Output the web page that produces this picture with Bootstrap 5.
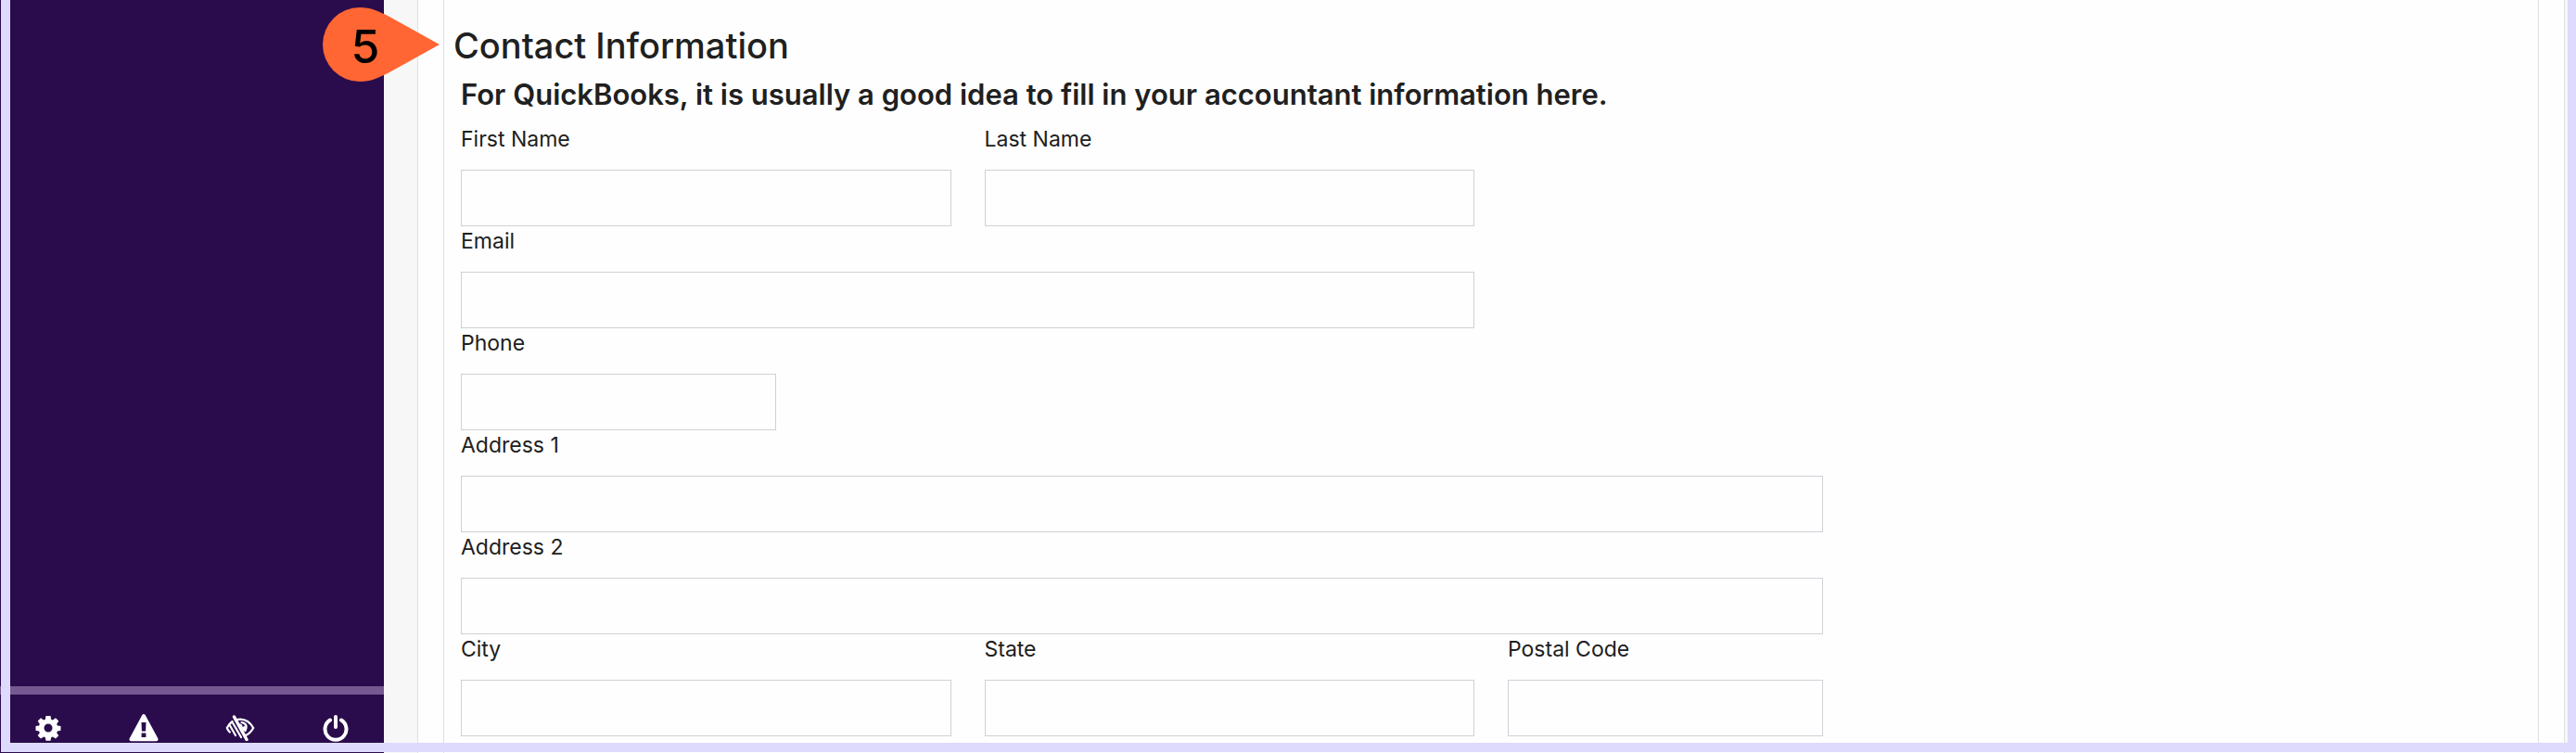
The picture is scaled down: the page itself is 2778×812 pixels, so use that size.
<!DOCTYPE html>
<html lang="en">
<head>
<meta charset="utf-8">
<meta name="viewport" content="width=device-width, initial-scale=1">
<title>Contact Information</title>
<link href="https://cdn.jsdelivr.net/npm/bootstrap@5.3.0/dist/css/bootstrap.min.css" rel="stylesheet">
<style>
body { font-family: Inter, "Liberation Sans", sans-serif; color: #202020; background: #f7f7f7; }
.sidebar { width: 414px; background: #2a0c4c; }
.sidebar-tools { border-top: 9px solid #765990; height: 72px; padding-top: 16px; }
.tool-btn { height: 40px; color: #fff; flex: 1 1 0; }
.tool-btn:hover { color: #dedafd; }
.page-pane { margin-left: 36px; margin-right: 12px; border: solid #e0e0e0; border-width: 0 1px; background: #fefefe; padding: 0 27px; }
.form-pane { border: solid #e0e0e0; border-width: 0 1px; padding-top: 24px; overflow: hidden; background: #fefefe; }
.section-title { font-size: 38px; line-height: 50px; font-weight: 500; padding-left: 10px; margin: 0; }
.section-note { font-size: 31px; line-height: 56px; font-weight: 600; padding-left: 18px; margin: 0 0 4px; }
.form-grid { --bs-gutter-x: 36px; margin: 0; }
.field-label { display: block; font-size: 23px; line-height: 33px; margin-bottom: 16px; }
.field-input { height: 61px; border: 1px solid #ced1d6; border-radius: 0; font-size: 23px; background: #fefefe; }
.step-marker { position: absolute; left: 348px; top: 8px; width: 126px; height: 80px; }
.step-number { position: absolute; inset: 0 auto auto 6px; width: 80px; line-height: 84px; font-size: 50px; font-weight: 500; text-align: center; color: #000; }
.frame-edge { position: absolute; inset: 0 0 1px 1px; border: solid #dedafd; border-width: 0 9px 10px 10px; pointer-events: none; }
</style>
</head>
<body>
<div class="position-relative d-flex min-vh-100 overflow-hidden">
  <nav class="sidebar flex-shrink-0 d-flex flex-column justify-content-end" aria-label="Tools">
    <div class="sidebar-tools d-flex">
      <button type="button" class="tool-btn btn border-0 rounded-0 p-0" aria-label="Settings">
        <svg width="28" height="28" viewBox="0 0 28 28"><path fill="currentColor" fill-rule="evenodd" d="M11.500 1h5l.7 3.700 1.700.7 3.100-2.100 3.300 3.300-2.100 3.100.7 1.700 3.600.7v4.700l-3.600.7-.7 1.700 2.100 3.100-3.300 3.300-3.100-2.100-1.700.7-.7 3.600h-5l-.7-3.600-1.700-.7-3.100 2.100-3.300-3.300 2.100-3.100-.7-1.700-3.600-.7v-4.700l3.600-.7.7-1.700-2.100-3.100 3.300-3.300 3.100 2.100 1.700-.7zM14 9.500a4.500 4.500 0 1 0 0 9 4.500 4.500 0 0 0 0-9z"/></svg>
      </button>
      <button type="button" class="tool-btn btn border-0 rounded-0 p-0" aria-label="Alerts">
        <svg width="32" height="30" viewBox="0 0 32 30"><path fill="currentColor" fill-rule="evenodd" d="M14.200 1.300q1.800-2.400 3.600 0l13.500 25q1 2.700-1.800 3h-27q-2.800-.3-1.800-3zM13.500 9l.4 9.500h4.200l.4-9.500zM13.600 20.500v4.500h4.800v-4.500z"/></svg>
      </button>
      <button type="button" class="tool-btn btn border-0 rounded-0 p-0" aria-label="Low vision">
        <svg width="32" height="28" viewBox="0 0 32 28" fill="none" stroke="currentColor" stroke-width="2.200" stroke-linecap="round"><path d="M7.500 7Q3.500 10 1.800 14q1 2.500 3 4.500M12 5q12-2.500 18.200 9-3 5.500-8.200 8"/><path stroke-width="3.400" d="M9.500 2l13.500 24.500"/><path d="M17.500 8q7.500 1.500 4 9M5 11.500l6 10.500M8 8.500l9 15.500"/><path fill="currentColor" stroke="none" d="M15 9q4 1 3.500 4 2-.5 3-2 1 4-1.500 7z"/></svg>
      </button>
      <button type="button" class="tool-btn btn border-0 rounded-0 p-0" aria-label="Log out">
        <svg width="28" height="30" viewBox="0 0 28 30" fill="none" stroke="currentColor" stroke-width="4" stroke-linecap="round"><path d="M8 6.500a11.500 11.500 0 1 0 12 0M14 3v11"/></svg>
      </button>
    </div>
  </nav>

  <main class="page-pane flex-grow-1 d-flex">
    <form class="form-pane flex-grow-1">
      <h2 class="section-title">Contact Information</h2>
      <h3 class="section-note">For QuickBooks, it is usually a good idea to fill in your accountant information here.</h3>
      <div class="row form-grid">
        <div class="col-3"><label class="field-label" for="first">First Name</label><input class="form-control field-input" id="first" type="text"></div>
        <div class="col-3"><label class="field-label" for="last">Last Name</label><input class="form-control field-input" id="last" type="text"></div>
      </div>
      <div class="row form-grid">
        <div class="col-6"><label class="field-label" for="email">Email</label><input class="form-control field-input" id="email" type="email"></div>
      </div>
      <div class="row form-grid">
        <div class="col-2"><label class="field-label" for="phone">Phone</label><input class="form-control field-input" id="phone" type="tel"></div>
      </div>
      <div class="row form-grid">
        <div class="col-8"><label class="field-label" for="addr1">Address 1</label><input class="form-control field-input" id="addr1" type="text"></div>
      </div>
      <div class="row form-grid">
        <div class="col-8"><label class="field-label" for="addr2">Address 2</label><input class="form-control field-input" id="addr2" type="text"></div>
      </div>
      <div class="row form-grid">
        <div class="col-3"><label class="field-label" for="city">City</label><input class="form-control field-input" id="city" type="text"></div>
        <div class="col-3"><label class="field-label" for="state">State</label><input class="form-control field-input" id="state" type="text"></div>
        <div class="col-2"><label class="field-label" for="postal">Postal Code</label><input class="form-control field-input" id="postal" type="text"></div>
      </div>
    </form>
  </main>

  <div class="frame-edge"></div>
  <div class="step-marker">
    <svg class="d-block" width="126" height="80" viewBox="0 0 126 80" aria-hidden="true"><path fill="#ff6633" d="M40 0C52 0 60 4 72 10L126 40 72 70C60 76 52 80 40 80A40 40 0 0 1 40 0z"/></svg>
    <span class="step-number">5</span>
  </div>
</div>
<script src="https://cdn.jsdelivr.net/npm/bootstrap@5.3.0/dist/js/bootstrap.bundle.min.js"></script>
</body>
</html>
